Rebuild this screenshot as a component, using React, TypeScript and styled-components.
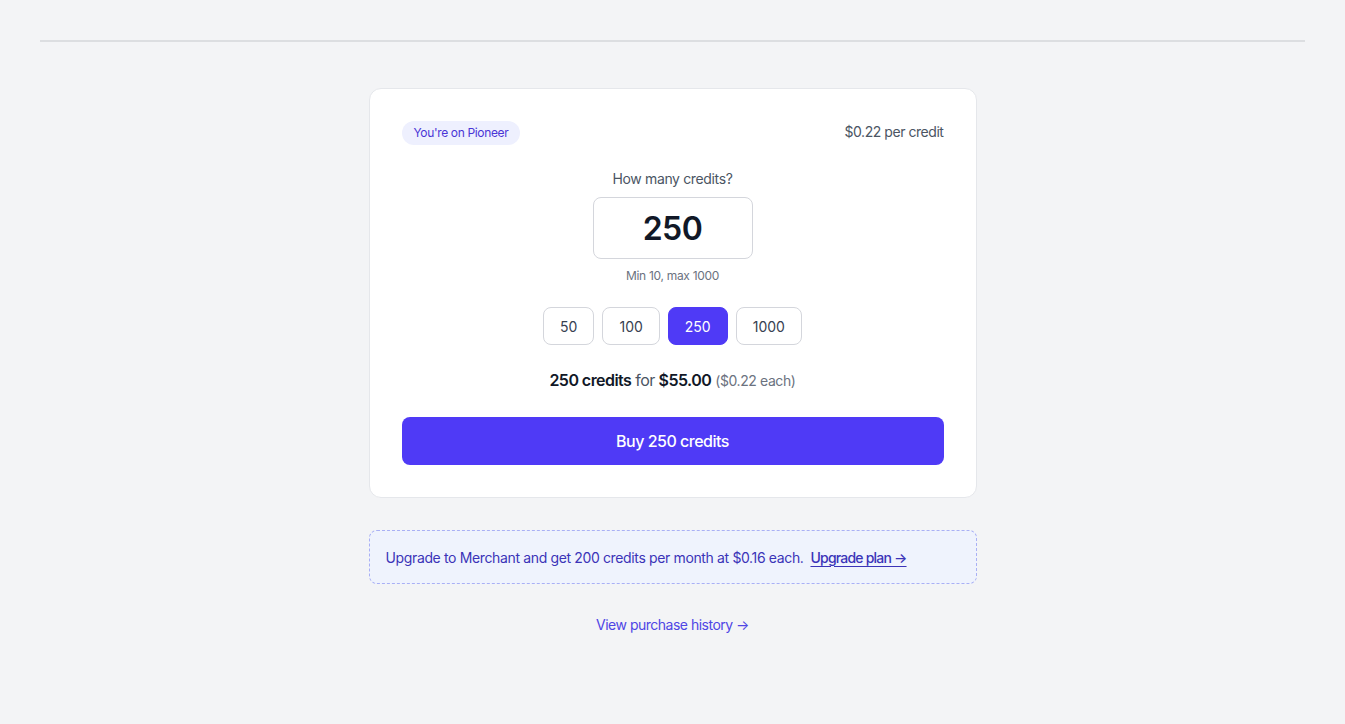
import { useState } from 'react';
import styled, { createGlobalStyle } from 'styled-components';

const COLORS = {
    PAGE: '#f3f4f6',
    RULE: '#dcdee1',
    WHITE: '#ffffff',
    BORDER: '#e5e7eb',
    INPUT_BORDER: '#d4d6dc',
    TEXT: '#111827',
    MUTED: '#4b5563',
    SUBTLE: '#6b7280',
    PRIMARY: '#4f3af6',
    BADGE_BG: '#eef0fe',
    BADGE_TEXT: '#4a35d6',
    NOTE_BG: '#eff3fd',
    NOTE_BORDER: '#a9b0f5',
    NOTE_TEXT: '#3b34b8',
    LINK: '#4f46e5',
};

const PRESETS = [50, 100, 250, 1000];
const PRICE = 0.22;

const GlobalStyle = createGlobalStyle`
    body {
        margin: 0;
        background: ${COLORS.PAGE};
        font-family: Inter, 'Noto Sans', sans-serif;
        color: ${COLORS.TEXT};
        -webkit-font-smoothing: antialiased;
    }
`;

const Page = styled.div`
    min-height: 724px;
    padding: 0 40px;
    box-sizing: border-box;
`;

const HeaderRule = styled.div`
    height: 40px;
    border-bottom: 2px solid ${COLORS.RULE};
`;

const Main = styled.main`
    width: 608px;
    margin: 46px auto 0;
    display: flex;
    flex-direction: column;
    align-items: stretch;
`;

const Card = styled.section`
    background: ${COLORS.WHITE};
    border: 1px solid ${COLORS.BORDER};
    border-radius: 12px;
    padding: 32px;
    display: flex;
    flex-direction: column;
    align-items: center;
`;

const TopRow = styled.div`
    width: 100%;
    display: flex;
    justify-content: space-between;
    align-items: center;
`;

const Badge = styled.span`
    background: ${COLORS.BADGE_BG};
    color: ${COLORS.BADGE_TEXT};
    font-size: 12px;
    line-height: 24px;
    padding: 0 12px;
    border-radius: 12px;
    letter-spacing: -0.35px;
`;

const Rate = styled.span`
    font-size: 14px;
    line-height: 20px;
    margin-top: -2px;
    color: ${COLORS.MUTED};
    letter-spacing: -0.45px;
`;

const Question = styled.div`
    margin-top: 24px;
    font-size: 14px;
    line-height: 20px;
    color: ${COLORS.MUTED};
    letter-spacing: -0.35px;
`;

const AmountInput = styled.input`
    margin-top: 8px;
    width: 160px;
    height: 62px;
    box-sizing: border-box;
    border: 1px solid ${COLORS.INPUT_BORDER};
    border-radius: 8px;
    text-align: center;
    font-family: inherit;
    font-size: 32px;
    font-weight: 600;
    color: ${COLORS.TEXT};
    outline: none;
    letter-spacing: -0.5px;
`;

const Hint = styled.div`
    margin-top: 8px;
    font-size: 12px;
    line-height: 18px;
    color: ${COLORS.SUBTLE};
    letter-spacing: -0.3px;
`;

const Presets = styled.div`
    margin-top: 22px;
    display: flex;
    gap: 8px;
`;

const Preset = styled.button<{ $active: boolean }>`
    height: 38px;
    padding: 0 16px;
    border-radius: 8px;
    border: 1px solid ${(p) => (p.$active ? COLORS.PRIMARY : COLORS.INPUT_BORDER)};
    background: ${(p) => (p.$active ? COLORS.PRIMARY : COLORS.WHITE)};
    color: ${(p) => (p.$active ? COLORS.WHITE : '#374151')};
    font-family: inherit;
    font-size: 14px;
    cursor: pointer;
    letter-spacing: 0;
`;

const Summary = styled.div`
    margin-top: 24px;
    font-size: 16px;
    line-height: 22px;
    color: ${COLORS.MUTED};
    letter-spacing: -0.55px;

    strong {
        color: ${COLORS.TEXT};
        font-weight: 600;
    }
`;

const Each = styled.span`
    font-size: 14px;
    color: ${COLORS.SUBTLE};
    letter-spacing: -0.4px;
`;

const BuyButton = styled.button`
    margin-top: 25px;
    width: 100%;
    height: 48px;
    border: none;
    border-radius: 8px;
    background: ${COLORS.PRIMARY};
    color: ${COLORS.WHITE};
    font-family: inherit;
    font-size: 16px;
    font-weight: 500;
    cursor: pointer;
    letter-spacing: -0.5px;
`;

const UpgradeNote = styled.div`
    margin-top: 32px;
    height: 54px;
    box-sizing: border-box;
    padding: 0 16px;
    display: flex;
    align-items: center;
    gap: 7px;
    background: ${COLORS.NOTE_BG};
    border: 1px dashed ${COLORS.NOTE_BORDER};
    border-radius: 8px;
    font-size: 14px;
    color: ${COLORS.NOTE_TEXT};
    letter-spacing: -0.36px;
`;

const UpgradeLink = styled.a`
    color: ${COLORS.NOTE_TEXT};
    font-weight: 500;
    text-decoration: underline;
    text-decoration-thickness: 1px;
    text-underline-offset: 3px;
    letter-spacing: -0.8px;
`;

const HistoryLink = styled.a`
    margin-top: 31px;
    align-self: center;
    font-size: 14px;
    line-height: 20px;
    color: ${COLORS.LINK};
    text-decoration: none;
    letter-spacing: -0.5px;
`;

export default function App() {
    const [credits, setCredits] = useState(250);
    const total = (credits * PRICE).toFixed(2);

    return (
        <Page>
            <GlobalStyle />
            <HeaderRule />
            <Main>
                <Card>
                    <TopRow>
                        <Badge>You're on Pioneer</Badge>
                        <Rate>$0.22 per credit</Rate>
                    </TopRow>
                    <Question>How many credits?</Question>
                    <AmountInput
                        value={credits}
                        onChange={(e) => setCredits(Number(e.target.value) || 0)}
                    />
                    <Hint>Min 10, max 1000</Hint>
                    <Presets>
                        {PRESETS.map((n) => (
                            <Preset key={n} $active={n === credits} onClick={() => setCredits(n)}>
                                {n}
                            </Preset>
                        ))}
                    </Presets>
                    <Summary>
                        <strong>{credits} credits</strong> for <strong>${total}</strong>{' '}
                        <Each>($0.22 each)</Each>
                    </Summary>
                    <BuyButton>Buy {credits} credits</BuyButton>
                </Card>
                <UpgradeNote>
                    <span>Upgrade to Merchant and get 200 credits per month at $0.16 each.</span>
                    <UpgradeLink href="#">Upgrade plan →</UpgradeLink>
                </UpgradeNote>
                <HistoryLink href="#">View purchase history →</HistoryLink>
            </Main>
        </Page>
    );
}
